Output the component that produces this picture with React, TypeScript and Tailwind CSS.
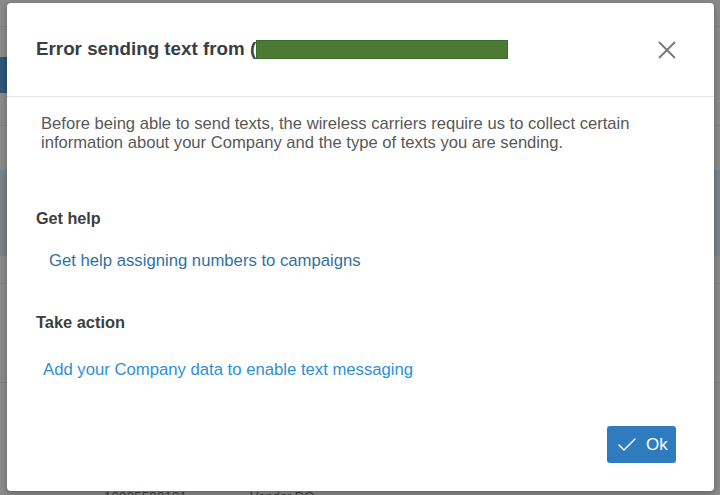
import { Check } from 'lucide-react';

export default function App() {
  return (
    <div
      className="relative w-[720px] h-[495px] overflow-hidden bg-[#8a8a8a] pt-[3px] pl-[7px]"
      style={{ fontFamily: '"Liberation Sans", Arial, sans-serif' }}
    >
      {/* page behind the overlay */}
      <div className="absolute left-0 top-[57px] w-[8px] h-[36px] bg-[#2f5578]" />
      <div className="absolute left-0 top-[170px] w-full h-[86px] bg-[#7b8288]" />
      <div className="absolute left-0 top-[26px] w-full h-px bg-[#7f7f7f]" />
      <div className="absolute left-0 top-[125px] w-full h-px bg-[#7f7f7f]" />
      <div className="absolute left-0 top-[283px] w-full h-px bg-[#7f7f7f]" />
      <div className="absolute left-0 top-[382px] w-full h-px bg-[#7f7f7f]" />
      <div className="absolute left-[104px] top-[489px] text-[13px] leading-[16px] text-[#3a3a3a] tracking-wide">
        10005500101
      </div>
      <div className="absolute left-[250px] top-[489px] text-[13px] leading-[16px] text-[#3a3a3a]">Vendor DO</div>

      <div className="relative flex flex-col w-[707px] h-[488px] bg-white rounded-[4px] shadow-[0_2px_6px_rgba(0,0,0,0.3)]">
        <div className="flex items-center justify-between h-[94px] pl-[29px] pr-[38px] border-b border-[#e3e3e3]">
          <h2 className="flex items-center text-[18.8px] font-bold text-[#393e43]">
            Error sending text from (
            <span className="inline-block w-[252px] h-[19px] bg-[#4b7a35] border border-[#3f6a2c]" />
          </h2>
          <button className="text-[#74787c]">
            <svg width="18" height="18" viewBox="0 0 18 18" fill="none" stroke="currentColor" strokeWidth="1.8">
              <path d="M1 1L17 17M17 1L1 17" />
            </svg>
          </button>
        </div>

        <div className="flex flex-col flex-1 pl-[29px] pr-[38px]">
          <p className="mt-[17px] pl-[5px] text-[16.6px] leading-[19px] text-[#585858]">
            Before being able to send texts, the wireless carriers require us to collect certain
            information about your Company and the type of texts you are sending.
          </p>

          <h3 className="mt-[57px] text-[16.2px] font-bold text-[#3b3f43] leading-[18px]">Get help</h3>
          <a className="mt-[25px] pl-[13px] text-[16.7px] leading-[18px] text-[#33709f]">
            Get help assigning numbers to campaigns
          </a>

          <h3 className="mt-[43px] text-[16.4px] font-bold text-[#3b3f43] leading-[18px]">Take action</h3>
          <a className="mt-[30px] pl-[7px] text-[16.7px] leading-[18px] text-[#2e8fd6]">
            Add your Company data to enable text messaging
          </a>

          <div className="flex justify-end mt-auto mb-[28px]">
            <button className="flex items-center gap-[7px] h-[37px] w-[69px] pl-[8px] rounded-[3px] bg-[#2f7bbd] text-white text-[17px]">
              <Check size={24} strokeWidth={1.5} />
              Ok
            </button>
          </div>
        </div>
      </div>
    </div>
  );
}
